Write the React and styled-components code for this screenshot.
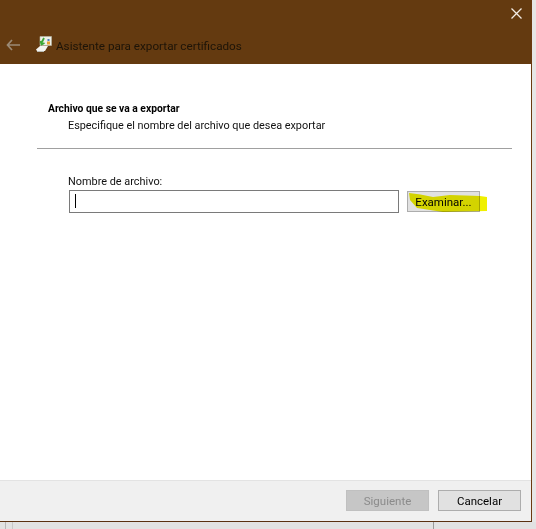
import React from "react";
import styled, { createGlobalStyle } from "styled-components";

const Global = createGlobalStyle`
  html, body { margin: 0; padding: 0; }
  body { width: 536px; height: 529px; overflow: hidden; background: #e4e4e4; font-family: Roboto, "Open Sans", sans-serif; }
`;

const Screen = styled.div`
  width: 536px;
  height: 529px;
  display: flex;
  flex-direction: column;
  background: #e6e6e6;
`;

const Dialog = styled.div`
  width: 532px;
  height: 522px;
  box-sizing: border-box;
  display: flex;
  flex-direction: column;
  border-right: 1px solid #6b3a10;
  border-bottom: 1px solid #5a3010;
  background: #fff;
`;

const Header = styled.header`
  height: 64px;
  flex: none;
  box-sizing: border-box;
  background: #643a10;
  padding: 0 0 10px 6px;
  display: flex;
  align-items: flex-end;
  position: relative;
`;

const BackIcon = styled.svg`
  width: 14px;
  height: 12px;
  margin-bottom: 3px;
  flex: none;
`;

const WizardIcon = styled.svg`
  width: 18px;
  height: 18px;
  margin-left: 15px;
  margin-bottom: 1px;
  flex: none;
`;

const Title = styled.h1`
  margin: 0 0 0 3px;
  font-size: 11.7px;
  line-height: 16px;
  font-weight: 400;
  color: #1d1408;
  white-space: nowrap;
`;

const Close = styled.svg`
  position: absolute;
  top: 8px;
  right: 9px;
  width: 11px;
  height: 11px;
`;

const Main = styled.main`
  flex: 1;
  display: flex;
  flex-direction: column;
  padding-top: 38px;
  position: relative;
`;

const SectionTitle = styled.h2`
  margin: 0 0 0 48px;
  font-size: 10.3px;
  line-height: 14px;
  font-weight: 700;
  color: #000;
`;

const SectionText = styled.p`
  margin: 2px 0 0 68px;
  font-size: 10.85px;
  line-height: 16px;
  color: #111;
  white-space: nowrap;
`;

const Rule = styled.hr`
  margin: 14px 19px 0 37px;
  border: 0;
  border-top: 1px solid #a0a0a0;
  height: 0;
`;

const FileField = styled.div`
  margin: 25px 0 0 68px;
  display: flex;
  flex-direction: column;
`;

const FieldLabel = styled.label`
  font-size: 10.9px;
  line-height: 16px;
  color: #111;
`;

const FieldRow = styled.div`
  display: flex;
  gap: 8px;
  align-items: center;
`;

const FileInput = styled.div`
  width: 330px;
  height: 23px;
  margin-left: 1px;
  box-sizing: border-box;
  border: 1px solid #7a7a7a;
  background: #fff;
  padding: 3px 5px;
`;

const Caret = styled.span`
  display: block;
  width: 1px;
  height: 14px;
  background: #000;
`;

const Button = styled.button`
  box-sizing: border-box;
  width: ${p => p.$w}px;
  height: 21px;
  padding: 0;
  font-family: inherit;
  font-size: 11.5px;
  border: 1px solid ${p => (p.disabled ? "#c0c0c0" : "#adadad")};
  background: ${p => (p.disabled ? "#c6c6c6" : "#e1e1e1")};
  color: ${p => (p.disabled ? "#8b8b8b" : "#000")};
`;

const Highlight = styled.svg`
  position: absolute;
  left: 400px;
  top: 120px;
  width: 100px;
  height: 40px;
  pointer-events: none;
  mix-blend-mode: multiply;
`;

const Footer = styled.footer`
  height: 41px;
  flex: none;
  box-sizing: border-box;
  background: #f0f0f0;
  border-top: 1px solid #e3e3e3;
  padding: 9px 10px 0 0;
  display: flex;
  justify-content: flex-end;
  gap: 9px;
`;

const Taskbar = styled.div`
  flex: 1;
  background:
    linear-gradient(#b8b8b8, #b8b8b8) 5px 0 / 1px 100% no-repeat,
    linear-gradient(#c8c8c8, #c8c8c8) 12px 0 / 1px 100% no-repeat,
    linear-gradient(#9a9a9a, #9a9a9a) 433px 0 / 1px 100% no-repeat,
    #e2e2e2;
`;

export default function App() {
  return (
    <Screen>
      <Global />
      <Dialog>
        <Header>
          <BackIcon viewBox="0 0 14 12">
            <path d="M6 1 1.5 6 6 11M2 6h12" fill="none" stroke="#9b8a76" strokeWidth="1.7" />
          </BackIcon>
          <WizardIcon viewBox="0 0 18 18">
            <path d="M5 1.5h11.5v9H5z" fill="#eef0e8" stroke="#b9b9a8" strokeWidth=".6" />
            <path d="M12 6.5h3v3h-3z" fill="#e8a030" />
            <path d="M12.5 4h2v2h-2z" fill="#4f7fc0" />
            <path d="M9 3 6.5 8M5.5 6l1 3.5 3-1.5" fill="none" stroke="#3aa836" strokeWidth="1.8" />
            <path d="M1 14.5 5 11h8l-3 5H2z" fill="#f4f4f0" />
            <path d="M2 16h7v1H2z" fill="#b8b8b0" />
          </WizardIcon>
          <Title>Asistente para exportar certificados</Title>
          <Close viewBox="0 0 11 11">
            <path d="M.5.5l10 10M10.5.5l-10 10" stroke="#f3ece4" strokeWidth="1.3" />
          </Close>
        </Header>
        <Main>
          <SectionTitle>Archivo que se va a exportar</SectionTitle>
          <SectionText>Especifique el nombre del archivo que desea exportar</SectionText>
          <Rule />
          <FileField>
            <FieldLabel>Nombre de archivo:</FieldLabel>
            <FieldRow>
              <FileInput><Caret /></FileInput>
              <Button $w={73}>Examinar...</Button>
            </FieldRow>
          </FileField>
          <Highlight viewBox="0 0 100 40">
            <path d="M9 9 Q20 10 33 13 L50 11 L80 12 L87 13 L87 27 L43 28 L17 24 L10 16 Z" fill="#f0f000" />
          </Highlight>
        </Main>
        <Footer>
          <Button $w={83} disabled>Siguiente</Button>
          <Button $w={83}>Cancelar</Button>
        </Footer>
      </Dialog>
      <Taskbar />
    </Screen>
  );
}
